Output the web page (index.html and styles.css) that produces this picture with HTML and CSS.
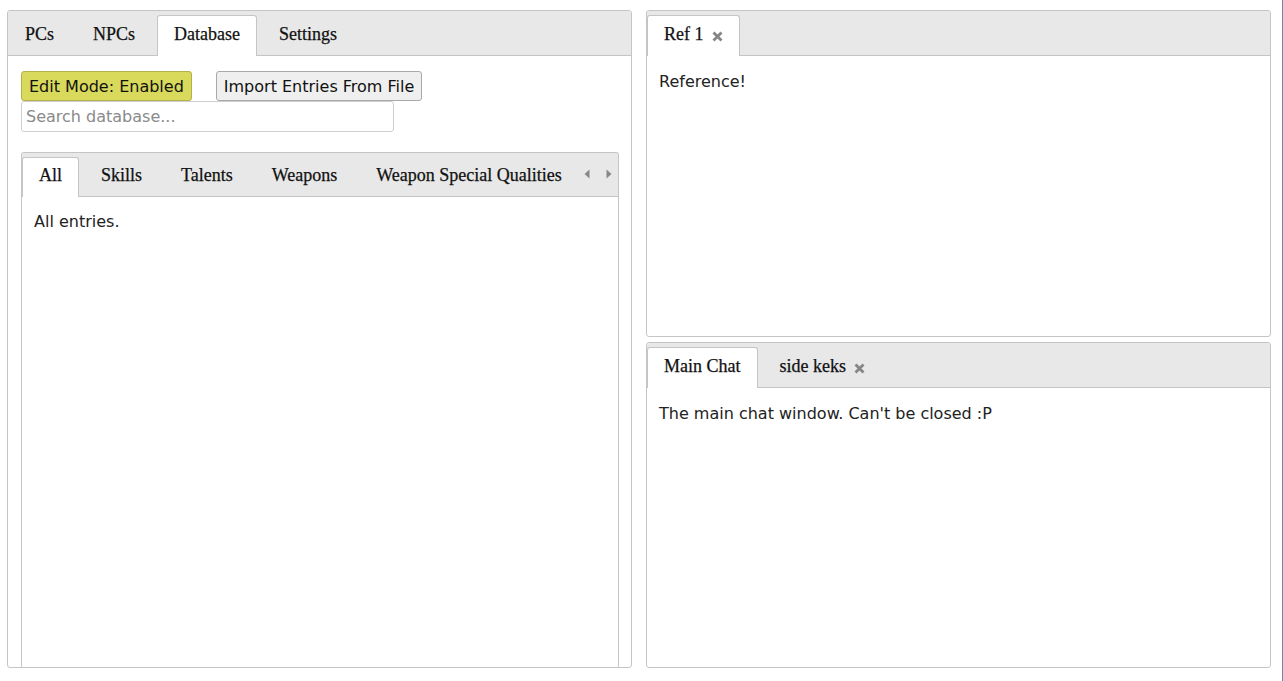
FILE: index.html
```
<!DOCTYPE html>
<html lang="en">
<head>
<meta charset="utf-8">
<title>Tabletop</title>
<link rel="stylesheet" href="styles.css">
</head>
<body>
<div class="app">
  <section class="panel panel-left">
    <nav class="tabbar">
      <div class="tab">PCs</div>
      <div class="tab">NPCs</div>
      <div class="tab active">Database</div>
      <div class="tab">Settings</div>
    </nav>
    <div class="panel-body db-body">
      <div class="btn-row">
        <button class="btn btn-edit">Edit Mode: Enabled</button>
        <button class="btn">Import Entries From File</button>
      </div>
      <input class="search" type="text" placeholder="Search database...">
      <div class="panel inner-panel">
        <nav class="tabbar tabbar-inner">
          <div class="tabs-scroll">
            <div class="tab active">All</div>
            <div class="tab">Skills</div>
            <div class="tab">Talents</div>
            <div class="tab">Weapons</div>
            <div class="tab">Weapon Special Qualities</div>
          </div>
          <div class="scroll-arrows">
            <svg width="6" height="10" viewBox="0 0 6 10"><polygon points="5.5,0.5 5.5,9.5 0.5,5" fill="#888"/></svg>
            <svg width="6" height="10" viewBox="0 0 6 10"><polygon points="0.5,0.5 0.5,9.5 5.5,5" fill="#888"/></svg>
          </div>
        </nav>
        <div class="panel-body">All entries.</div>
      </div>
    </div>
  </section>
  <div class="right-col">
    <section class="panel panel-top">
      <nav class="tabbar">
        <div class="tab active">Ref 1 <span class="close"><svg width="11" height="11" viewBox="0 0 11 11"><path d="M1.5 1.5 L9.5 9.5 M9.5 1.5 L1.5 9.5" stroke="#858585" stroke-width="2.8"/></svg></span></div>
      </nav>
      <div class="panel-body">Reference!</div>
    </section>
    <section class="panel panel-bottom">
      <nav class="tabbar">
        <div class="tab active">Main Chat</div>
        <div class="tab">side keks <span class="close"><svg width="11" height="11" viewBox="0 0 11 11"><path d="M1.5 1.5 L9.5 9.5 M9.5 1.5 L1.5 9.5" stroke="#858585" stroke-width="2.8"/></svg></span></div>
      </nav>
      <div class="panel-body">The main chat window. Can't be closed :P</div>
    </section>
  </div>
</div>
</body>
</html>
```

FILE: styles.css
```
* { box-sizing: border-box; }
html, body { margin: 0; padding: 0; background: #fff; }
body {
  font-family: "DejaVu Sans", Verdana, sans-serif;
  font-size: 16px;
  color: #222;
}
.app {
  width: 1283px;
  height: 681px;
  display: flex;
  gap: 14px;
  padding: 10px 11px 13px 7px;
  border-right: 1px solid #6a88b3;
}
.panel {
  border: 1px solid #c5c5c5;
  border-radius: 3px;
  background: #fff;
  display: flex;
  flex-direction: column;
  overflow: hidden;
}
.panel-left { width: 626px; }
.right-col {
  width: 626px;
  display: flex;
  flex-direction: column;
  gap: 5px;
}
.panel-top { height: 327px; flex: none; }
.panel-bottom { flex: 1; }
.tabbar {
  flex: none;
  display: flex;
  align-items: flex-end;
  gap: 5px;
  height: 45px;
  padding: 4px 0 0 0;
  background: #e8e8e8;
  border-bottom: 1px solid #c5c5c5;
  border-radius: 2px 2px 0 0;
}
.tab {
  height: 41px;
  margin-bottom: -1px;
  padding: 0 16px 3px;
  display: flex;
  align-items: center;
  border: 1px solid transparent;
  border-bottom: 0;
  border-radius: 3px 3px 0 0;
  font-family: "Liberation Serif", "Times New Roman", serif;
  font-size: 18px;
  color: #111;
  -webkit-text-stroke: 0.25px #111;
  white-space: nowrap;
}
.tab.active {
  background: #fff;
  border-color: #c5c5c5;
}
.close {
  display: inline-flex;
  margin-left: 8px;
  margin-top: 3px;
}
.panel-body {
  padding: 17px 12px 16px;
  line-height: 18px;
}
.db-body {
  flex: 1;
  display: flex;
  flex-direction: column;
  padding: 15px 12px 0 13px;
  min-height: 0;
}
.btn-row {
  display: flex;
  gap: 24px;
}
.btn {
  font-family: "DejaVu Sans", Verdana, sans-serif;
  font-size: 16px;
  color: #111;
  height: 30px;
  padding: 0 7px;
  background: #efefef;
  border: 1px solid #a9a9a9;
  border-radius: 3px;
}
.btn-edit {
  background: #d9d95b;
  border-color: #b3b24a;
}
.search {
  width: 373px;
  height: 31px;
  margin: 0;
  padding: 0 4px;
  font-family: "DejaVu Sans", Verdana, sans-serif;
  font-size: 16px;
  border: 1px solid #cfcfcf;
  border-radius: 3px;
  color: #222;
}
.search::placeholder { color: #8a8a8a; }
.inner-panel {
  flex: 1;
  margin-top: 20px;
  border-bottom: 0;
  border-radius: 3px 3px 0 0;
}
.inner-panel .panel-body { padding-top: 16px; }
.tabbar-inner {
  height: 44px;
  justify-content: space-between;
}
.tabs-scroll {
  display: flex;
  gap: 5px;
  align-items: flex-end;
  overflow: hidden;
  height: 40px;
  margin-bottom: -1px;
}
.tabbar-inner .tab { height: 40px; margin-bottom: 0; padding-bottom: 5px; }
.scroll-arrows {
  display: flex;
  align-items: center;
  gap: 16px;
  height: 40px;
  padding: 0 6px 5px 0;
}
```
